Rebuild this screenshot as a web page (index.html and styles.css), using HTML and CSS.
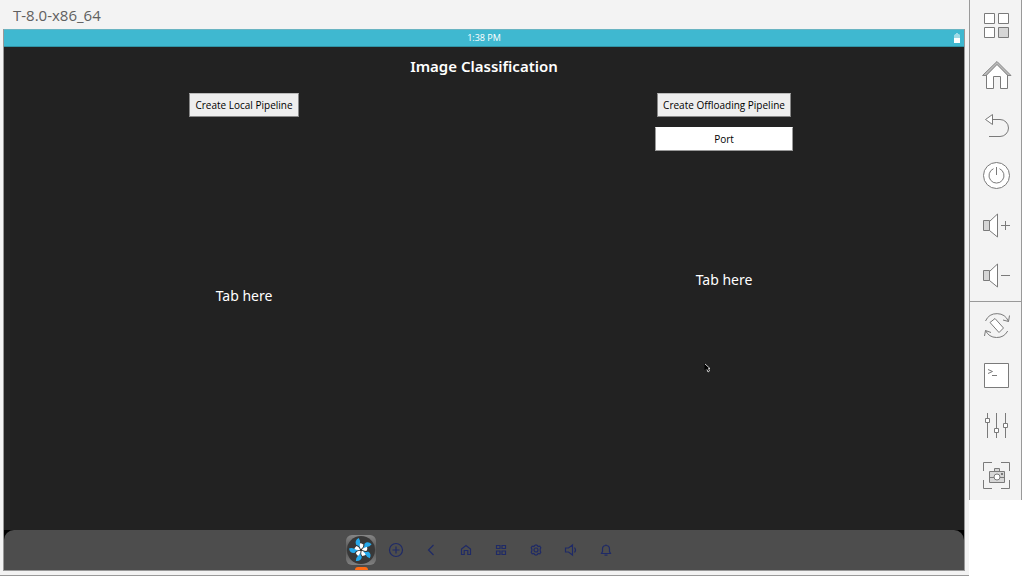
FILE: index.html
```html
<!DOCTYPE html>
<html lang="en">
<head>
<meta charset="utf-8">
<title>T-8.0-x86_64</title>
<link rel="stylesheet" href="styles.css">
</head>
<body>
<div class="desktop">
  <main class="emulator">
    <header class="window-title">T-8.0-x86_64</header>
    <section class="screen">
      <div class="status">
        <time class="clock">1:38 PM</time>
        <svg class="battery" width="6" height="10" viewBox="0 0 6 10"><path d="M1 1.500V1h1V0h2v1h1l1 1v3H0V2z" fill="#9fdbe6"/><path d="M0 5h6v5H0z" fill="#fff"/></svg>
      </div>
      <div class="app">
        <h1 class="app-title">Image Classification</h1>
        <div class="panes">
          <div class="pane">
            <button class="create" type="button">Create Local Pipeline</button>
            <p class="hint hint-local">Tab here</p>
          </div>
          <div class="pane">
            <button class="create" type="button">Create Offloading Pipeline</button>
            <input class="port" type="text" placeholder="Port" aria-label="Port">
            <p class="hint hint-offload">Tab here</p>
          </div>
        </div>
        <svg class="cursor" width="7" height="10" viewBox="0 0 7 10"><path d="M.5.500v6.500l2-1.500L4 9l1.500-1L4.500 5H6z" fill="#000"/><path d="M1 1l5 4.500H4.500L5.500 8 4 9 3 6.500" fill="none" stroke="#ddd" stroke-width=".9"/></svg>
      </div>
      <div class="dock-wrap">
      <nav class="dock" aria-label="Dock">
        <button class="dock-item running" type="button" aria-label="Tizen">
          <svg width="30" height="30" viewBox="0 0 30 30">
            <defs>
              <linearGradient id="tile" x1="0" y1="0" x2="0" y2="1"><stop offset="0" stop-color="#858585"/><stop offset=".5" stop-color="#555"/><stop offset="1" stop-color="#808080"/></linearGradient>
              <g id="blade"><path d="M15 14.500L14.500 8Q17 8 19 10.500Q18.500 13 15.500 14z" fill="#fff"/><path d="M12 8.500Q11.500 4 16.500 3Q17.500 6 16 8.500Q15 10 15 12.500Q14 9.500 12 8.500z" fill="#25a9ec"/></g>
            </defs>
            <rect width="30" height="30" rx="6" fill="url(#tile)"/>
            <circle cx="15" cy="15" r="14" fill="#383838"/>
            <use href="#blade" transform="rotate(54 15 15)"/><use href="#blade" transform="rotate(126 15 15)"/><use href="#blade" transform="rotate(198 15 15)"/><use href="#blade" transform="rotate(270 15 15)"/><use href="#blade" transform="rotate(342 15 15)"/>
            <circle cx="15" cy="15" r="1.200" fill="#333"/>
          </svg>
        </button>
        <button class="dock-item" type="button" aria-label="Add"><svg width="16" height="16" viewBox="0 0 16 16"><circle cx="8" cy="8" r="6.500"/><path d="M8 4.500v7M4.500 8h7"/></svg></button>
        <button class="dock-item" type="button" aria-label="Back"><svg width="16" height="16" viewBox="0 0 16 16"><path d="M10.500 3L5.500 8l5 5"/></svg></button>
        <button class="dock-item" type="button" aria-label="Home"><svg width="16" height="16" viewBox="0 0 16 16"><path d="M3.500 12.500V7L8 3.500 12.500 7v5.500H9.800V8.500H6.200v4z"/></svg></button>
        <button class="dock-item" type="button" aria-label="Apps"><svg width="16" height="16" viewBox="0 0 16 16"><path d="M3.500 3.500h3.500v3H3.500zM9 3.500h3.500v3H9zM3.500 9h3.500v3.500H3.500zM9 9h3.500v3.500H9z"/></svg></button>
        <button class="dock-item" type="button" aria-label="Settings"><svg width="16" height="16" viewBox="0 0 16 16"><path d="M6.500 3.500L8 3l1.500.500.500 1 1.800-.3 1 1.500L12.200 7v2l.6 1.300-1 1.500-1.800-.3-.5 1L8 13l-1.500-.5-.5-1-1.800.3-1-1.500.6-1.300V7l-.6-1.300 1-1.500L6 4.500z"/><circle cx="8" cy="8" r="2"/></svg></button>
        <button class="dock-item" type="button" aria-label="Volume"><svg width="16" height="16" viewBox="0 0 16 16"><path d="M2.500 6h3l4-3v10l-4-3h-3zM11.500 5.500Q13.500 8 11.500 10.500"/></svg></button>
        <button class="dock-item" type="button" aria-label="Notifications"><svg width="16" height="16" viewBox="0 0 16 16"><path d="M3.500 11.500h9L11.500 9.500V7Q11.500 3.500 8 3.500T4.500 7v2.500zM6.500 13.200h3M8 3.500v-1"/></svg></button>
      </nav>
      </div>
    </section>
  </main>
  <aside class="controls" aria-label="Device controls">
    <button class="control" type="button" aria-label="Menu"><svg viewBox="0 0 51 50"><path class="white" d="M14.500 13.500h10v10h-10zM28.500 13.500h10v10h-10zM14.500 27.500h10v10h-10z"/><path class="shade" d="M28.500 27.500h10v10h-10z"/></svg></button>
    <button class="control" type="button" aria-label="Home"><svg viewBox="0 0 51 50"><path class="white" d="M16.500 25V38.500H23.500V26.500H30.500V38.500H37.500V25L27 14z"/><path d="M12.500 25.500L27 11.500 41 25.500H38L27 14.500 16 25.500z" fill="#bbb" stroke="#888"/></svg></button>
    <button class="control" type="button" aria-label="Back"><svg viewBox="0 0 51 50"><path d="M23 19.500h7a8.500 8.500 0 0 1 0 17H19"/><path class="white" d="M15.500 19.500l7-5v10z"/></svg></button>
    <button class="control" type="button" aria-label="Power"><svg viewBox="0 0 51 50"><circle class="white" cx="26.500" cy="25.500" r="13"/><path d="M23.500 18.700A7.500 7.500 0 1 0 29.500 18.700M26.500 17v8"/></svg></button>
    <button class="control" type="button" aria-label="Volume up"><svg viewBox="0 0 51 50"><path class="white" d="M19.500 21.500l8-7.500v23l-8-6.500z"/><path class="shade" d="M13.500 20.500h6v10h-6z"/><path d="M31 25.500h9M35.500 21v9"/></svg></button>
    <button class="control" type="button" aria-label="Volume down"><svg viewBox="0 0 51 50"><path class="white" d="M19.500 21.500l8-7.500v23l-8-6.500z"/><path class="shade" d="M13.500 20.500h6v10h-6z"/><path d="M31 25.500h9"/></svg></button>
    <hr class="divider">
    <button class="control" type="button" aria-label="Rotate"><svg viewBox="0 0 51 50"><path d="M15.500 21A12.500 12.500 0 0 1 38.500 21.500M33 20l5.500 1.500 1-6M37.700 31A12.500 12.500 0 0 1 15.500 30.500M14.500 36l1-5.500 5.500 2"/><path class="white" d="M25 18.500L20 22.500 29 32.500 33.500 28z"/></svg></button>
    <button class="control" type="button" aria-label="Shell"><svg viewBox="0 0 51 50"><path class="white" d="M14.500 13.500h24v24h-24z"/><path d="M18 19.500l4.500 2-4.500 2M22 25.500h5"/></svg></button>
    <button class="control" type="button" aria-label="Control panel"><svg viewBox="0 0 51 50"><path d="M17.500 13v25M26.500 13v25M35.500 13v25"/><path class="white" d="M15.500 18.500h4v4h-4zM24.500 28.500h4v4h-4zM33.500 23.500h4v4h-4z"/></svg></button>
    <button class="control" type="button" aria-label="Screenshot"><svg viewBox="0 0 51 50"><path d="M13.500 21v-8.500h8.500M31 12.500h8.500V21M39.500 30v8.500H31M22 38.500h-8.500V30"/><path class="shade" d="M24.500 21.500v-3h5v3M19.500 21.500h15v11h-15zM19.500 27.500h15"/><circle class="white" cx="27" cy="27" r="3"/><path d="M31 24h2" stroke-width="2"/></svg></button>
  </aside>
</div>
</body>
</html>
```
FILE: styles.css
```css
* { box-sizing: border-box; }
body {
  margin: 0;
  background: #fff;
  font-family: "Noto Sans", "Open Sans", sans-serif;
}
button { font: inherit; border: 0; padding: 0; background: none; }
.desktop {
  display: flex;
  align-items: flex-start;
  min-height: 100vh;
  padding: 0 5px 2px 0;
}
.emulator {
  flex: 1;
  align-self: stretch;
  display: flex;
  flex-direction: column;
  padding: 0 4px 4px 3px;
  background: #f3f3f3;
  border-bottom: 1px solid #999;
}
.window-title {
  padding: 5px 10px 4px;
  font: 15px/20px "Open Sans", "Noto Sans", sans-serif;
  color: #606060;
}
.screen {
  flex: 1;
  display: flex;
  flex-direction: column;
  border: 1px solid #999;
  border-top: 0;
  background: #222;
  color: #fff;
}
.status {
  display: flex;
  justify-content: center;
  align-items: center;
  position: relative;
  height: 18px;
  background: #3fb8d0;
  border-top: 1px solid #69b4c2;
  border-bottom: 1px solid #3193a5;
}
.clock { font: 9px/16px "Open Sans", "Noto Sans", sans-serif; }
.battery { position: absolute; right: 4px; top: 3px; }
.app {
  position: relative;
  flex: 1;
  display: flex;
  flex-direction: column;
}
.app-title {
  margin: 0;
  padding: 7px 0 15px;
  text-align: center;
  font-size: 15px;
  line-height: 24px;
  font-weight: 600;
}
.panes { flex: 1; display: grid; grid-template-columns: 1fr 1fr; }
.pane { display: flex; flex-direction: column; align-items: center; }
.create {
  height: 24px;
  padding: 0 5px 1px;
  background: #eee;
  border: 1px solid #888;
  border-top-color: #bbb;
  color: #000;
  font: 10px/20px "Open Sans", "Noto Sans", sans-serif;
}
.port {
  width: 138px;
  height: 24px;
  margin-top: 10px;
  padding: 0 0 1px;
  background: #fff;
  border: 1px solid #999;
  border-top-color: #fff;
  border-radius: 0;
  color: #000;
  text-align: center;
  font: 10px "Open Sans", "Noto Sans", sans-serif;
}
.port::placeholder { color: #000; opacity: 1; }
.hint { margin: 0; font-size: 14px; line-height: 20px; }
.hint-local { padding-top: 169px; }
.hint-offload { padding-top: 119px; }
.cursor { position: absolute; left: 700px; top: 316px; }
.dock-wrap { background: #000; }
.dock {
  display: flex;
  justify-content: center;
  height: 40px;
  padding-right: 1px;
  background: #4d4d4d;
  border-radius: 10px 10px 0 0;
}
.dock-item {
  position: relative;
  display: flex;
  justify-content: center;
  align-items: center;
  width: 35px;
  height: 40px;
}
.dock-item svg { fill: none; stroke: #1f2a66; stroke-width: 1.2; }
.running svg { stroke: none; }
.running::after {
  content: "";
  position: absolute;
  left: 11px;
  bottom: 0;
  width: 13px;
  height: 3px;
  border-radius: 3px 3px 0 0;
  background: #ff6a13;
}
.controls {
  width: 53px;
  display: flex;
  flex-direction: column;
  background: #f3f3f3;
  border: 1px solid #999;
  border-width: 0 1px;
}
.control { height: 50px; }
.control svg {
  display: block;
  width: 51px;
  height: 50px;
  fill: none;
  stroke: #7a7a7a;
}
.control .white { fill: #fff; }
.control .shade { fill: #d6d6d6; }
.divider {
  width: 100%;
  height: 1px;
  margin: 1px 0 -2px;
  border: 0;
  background: #999;
}
```
